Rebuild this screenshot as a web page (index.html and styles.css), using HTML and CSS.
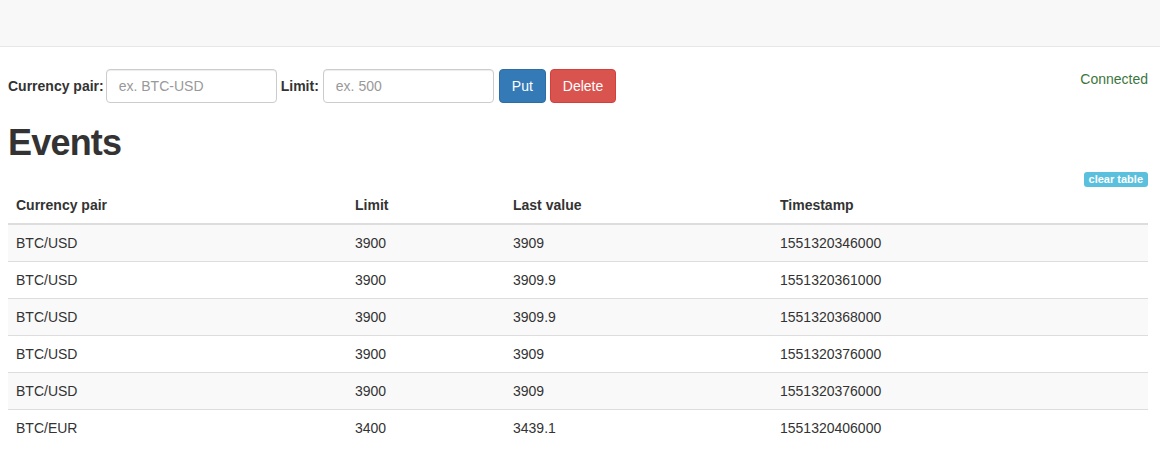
FILE: index.html
```html
<!DOCTYPE html>
<html>
<head>
<meta charset="utf-8">
<link rel="stylesheet" href="styles.css">
</head>
<body>
<div class="navbar"></div>
<div class="container">
  <div class="toolbar">
    <form class="form-inline">
      <label class="lbl lbl-pair">Currency pair:</label>
      <input class="form-control" type="text" placeholder="ex. BTC-USD">
      <label class="lbl">Limit:</label>
      <input class="form-control" type="text" placeholder="ex. 500">
      <button type="button" class="btn btn-primary">Put</button>
      <button type="button" class="btn btn-danger">Delete</button>
    </form>
    <div class="status">Connected</div>
  </div>
  <h1 class="title">Events</h1>
  <div class="clear-bar"><span class="label-info">clear table</span></div>
  <table class="table">
    <thead>
      <tr><th class="c1">Currency pair</th><th class="c2">Limit</th><th class="c3">Last value</th><th class="c4">Timestamp</th></tr>
    </thead>
    <tbody>
      <tr><td>BTC/USD</td><td>3900</td><td>3909</td><td>1551320346000</td></tr>
      <tr><td>BTC/USD</td><td>3900</td><td>3909.9</td><td>1551320361000</td></tr>
      <tr><td>BTC/USD</td><td>3900</td><td>3909.9</td><td>1551320368000</td></tr>
      <tr><td>BTC/USD</td><td>3900</td><td>3909</td><td>1551320376000</td></tr>
      <tr><td>BTC/USD</td><td>3900</td><td>3909</td><td>1551320376000</td></tr>
      <tr><td>BTC/EUR</td><td>3400</td><td>3439.1</td><td>1551320406000</td></tr>
    </tbody>
  </table>
</div>
</body>
</html>
```
FILE: styles.css
```css
* { box-sizing: border-box; }
html, body { margin: 0; padding: 0; }
body {
  font-family: "Liberation Sans", Arial, Helvetica, sans-serif;
  font-size: 14px;
  line-height: 20px;
  color: #333;
  background: #fff;
}
.navbar {
  height: 47px;
  background: #f8f8f8;
  border-bottom: 1px solid #e7e7e7;
}
.container {
  padding: 0 12px 0 8px;
}
.toolbar {
  display: flex;
  justify-content: space-between;
  align-items: flex-start;
  margin-top: 22px;
}
.form-inline {
  display: flex;
  align-items: center;
  margin: 0;
}
.lbl {
  font-weight: bold;
  margin-right: 4px;
}
.lbl-pair { margin-right: 2px; }
.form-control {
  width: 171px;
  height: 34px;
  padding: 6px 12px;
  font-family: inherit;
  font-size: 14px;
  color: #555;
  border: 1px solid #ccc;
  border-radius: 4px;
  box-shadow: inset 0 1px 1px rgba(0,0,0,.075);
  margin-right: 4px;
  outline: none;
}
.form-control::placeholder { color: #999; }
.btn {
  height: 34px;
  padding: 6px 12px;
  font-family: inherit;
  font-size: 14px;
  line-height: 20px;
  border: 1px solid transparent;
  border-radius: 4px;
  color: #fff;
  margin-right: 4px;
}
.btn-primary { background: #337ab7; border-color: #2e6da4; margin-left: 1px; }
.btn-danger { background: #d9534f; border-color: #d43f3a; }
.status {
  color: #3c763d;
}
.title {
  font-size: 36px;
  font-weight: bold;
  letter-spacing: -0.8px;
  line-height: 1.1;
  margin: 20px 0 9px;
}
.clear-bar {
  display: flex;
  justify-content: flex-end;
  height: 15px;
}
.label-info {
  display: inline-block;
  height: 15px;
  background: #5bc0de;
  color: #fff;
  font-size: 11px;
  font-weight: bold;
  line-height: 15px;
  padding: 0 5px;
  border-radius: 3px;
}
.table {
  width: 100%;
  border-collapse: collapse;
  border-spacing: 0;
}
.table th, .table td {
  padding: 8px;
  text-align: left;
  vertical-align: top;
  line-height: 20px;
}
.table th {
  font-weight: bold;
  border-bottom: 2px solid #ddd;
}
.table td { border-top: 1px solid #ddd; }
.table tbody tr:nth-child(odd) { background: #f9f9f9; }
.table tbody tr:first-child td { border-top: 0; }
.c1 { width: 339px; }
.c2 { width: 158px; }
.c3 { width: 267px; }
```
